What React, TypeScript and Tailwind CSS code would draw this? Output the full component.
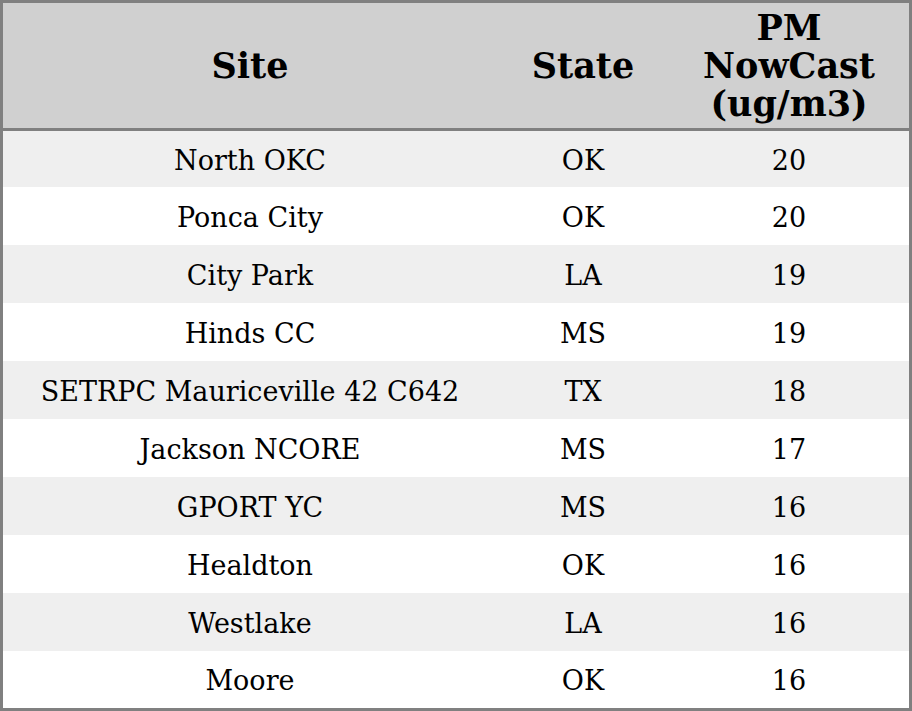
const rows: [string, string, number][] = [
  ['North OKC', 'OK', 20],
  ['Ponca City', 'OK', 20],
  ['City Park', 'LA', 19],
  ['Hinds CC', 'MS', 19],
  ['SETRPC Mauriceville 42 C642', 'TX', 18],
  ['Jackson NCORE', 'MS', 17],
  ['GPORT YC', 'MS', 16],
  ['Healdton', 'OK', 16],
  ['Westlake', 'LA', 16],
  ['Moore', 'OK', 16],
];

export default function App() {
  return (
    <div
      className="w-[912px] h-[711px] border-[3px] border-[#808080] bg-white text-black"
      style={{ fontFamily: '"DejaVu Serif", serif' }}
    >
      <div className="grid grid-cols-[494px_172px_240px] h-[128px] bg-[#d0d0d0] border-b-[3px] border-[#808080] text-[35px] font-bold leading-[38px]">
        <div className="flex items-center justify-center">Site</div>
        <div className="flex items-center justify-center">State</div>
        <div className="flex items-center justify-center text-center">
          PM
          <br />
          NowCast
          <br />
          (ug/m3)
        </div>
      </div>
      <div className="flex flex-col">
        {rows.map(([site, state, pm], i) => (
          <div
            key={site}
            className={
              'grid grid-cols-[494px_172px_240px] items-center pt-[4px] text-center text-[27px] ' +
              (i === 0 ? 'h-[56px] ' : i === rows.length - 1 ? 'h-[57px] ' : 'h-[58px] ') +
              (i % 2 === 0 ? 'bg-[#efefef]' : 'bg-white')
            }
          >
            <div>{site}</div>
            <div>{state}</div>
            <div>{pm}</div>
          </div>
        ))}
      </div>
    </div>
  );
}
